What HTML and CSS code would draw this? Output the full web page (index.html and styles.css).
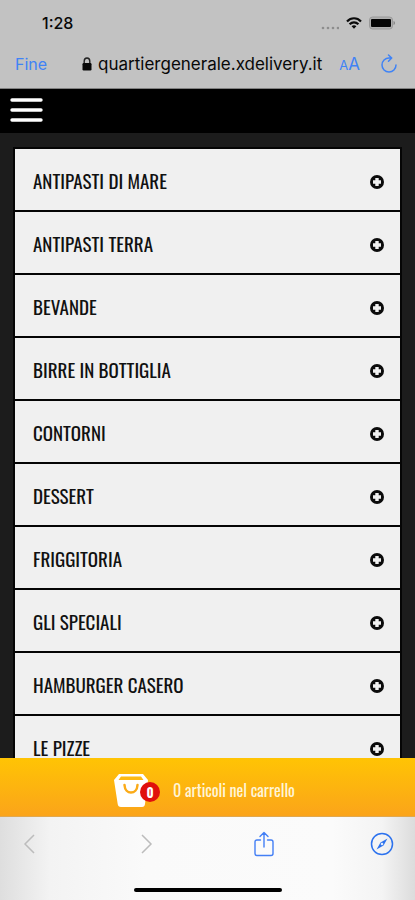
FILE: index.html
```html
<!DOCTYPE html>
<html lang="it">
<head>
<meta charset="utf-8">
<meta name="viewport" content="width=device-width, initial-scale=1">
<title>Quartier Generale</title>
<link rel="stylesheet" href="styles.css">
</head>
<body>
<svg class="sprite" aria-hidden="true">
  <symbol id="plus" viewBox="0 0 14 14">
    <circle cx="7" cy="7" r="7" fill="#0b0b0b"/>
    <path d="M7 3v8M3 7h8" stroke="#f0f0f0" stroke-width="3.400"/>
  </symbol>
</svg>
<header class="browser">
  <div class="status">
    <span class="clock">1:28</span>
    <span class="signals">
      <svg width="18" height="4" viewBox="0 0 18 4" fill="#8d8d8d"><circle cx="2" cy="2" r="1.300"/><circle cx="7" cy="2" r="1.300"/><circle cx="12" cy="2" r="1.300"/><circle cx="17" cy="2" r="1.300"/></svg>
      <svg width="16" height="12" viewBox="0 0 16 12" fill="none" stroke="#0a0a0a" stroke-width="2.200"><path d="M1 4.400C5 .2 11 .2 15 4.400M3.600 7.300c2.600-2.700 6.200-2.700 8.800 0"/><path d="M5.600 9.200 8 11.800l2.400-2.600c-1.400-1.200-3.400-1.200-4.800 0z" fill="#0a0a0a" stroke="none"/></svg>
      <svg width="26" height="14" viewBox="0 0 26 14"><rect x=".5" y="1" width="23" height="12" rx="3" fill="#b0b0b0" stroke="#999"/><rect x="2" y="3" width="20" height="8" rx="1" fill="#050505"/><path d="M24.500 5c2 .6 2 3.400 0 4z" fill="#888"/></svg>
    </span>
  </div>
  <div class="address">
    <a class="done" href="#">Fine</a>
    <span class="url"><svg width="10" height="14" viewBox="0 0 10 14"><path d="M2.200 7V4.200a2.800 3.200 0 0 1 5.600 0V7" fill="none" stroke="#222" stroke-width="1.400"/><rect x=".5" y="6" width="9" height="7.500" rx="1.200" fill="#080808"/></svg>quartiergenerale.xdelivery.it</span>
    <button class="plain text-size" type="button" aria-label="Dimensione testo"><small>A</small>A</button>
    <button class="plain" type="button" aria-label="Ricarica"><svg width="18" height="20" viewBox="0 0 18 20" fill="none" stroke="#3f83f6" stroke-width="1.500" stroke-linecap="round" stroke-linejoin="round"><path d="M16 11a7 7 0 1 1-7-7h2.500M8.500 1l3.200 3-3.200 3.200"/></svg></button>
  </div>
</header>
<nav class="menu-bar">
  <button class="plain" type="button" aria-label="Menu"><svg width="33" height="24" viewBox="0 0 33 24" stroke="#fff" stroke-width="3.400" stroke-linecap="round"><path d="M2 2h29M2 12h29M2 22h29"/></svg></button>
</nav>
<main class="content">
  <div class="categories">
    <button class="category" type="button">ANTIPASTI DI MARE<svg><use href="#plus"/></svg></button>
    <button class="category" type="button">ANTIPASTI TERRA<svg><use href="#plus"/></svg></button>
    <button class="category" type="button">BEVANDE<svg><use href="#plus"/></svg></button>
    <button class="category" type="button">BIRRE IN BOTTIGLIA<svg><use href="#plus"/></svg></button>
    <button class="category" type="button">CONTORNI<svg><use href="#plus"/></svg></button>
    <button class="category" type="button">DESSERT<svg><use href="#plus"/></svg></button>
    <button class="category" type="button">FRIGGITORIA<svg><use href="#plus"/></svg></button>
    <button class="category" type="button">GLI SPECIALI<svg><use href="#plus"/></svg></button>
    <button class="category" type="button">HAMBURGER CASERO<svg><use href="#plus"/></svg></button>
    <button class="category" type="button">LE PIZZE<svg><use href="#plus"/></svg></button>
  </div>
</main>
<a class="cart" href="#">
  <span class="bag">
    <svg width="34" height="33" viewBox="0 0 34 33"><path d="M5 0h24l5 6-3 24q-.3 3-3 3H7q-3 0-3.300-3L0 6z" fill="#fff"/><path d="M7 2.500h20L29.500 6h-25z" fill="#fdb913"/><path d="M10.500 11c.5 10 12.500 10 13 0" fill="none" stroke="#fbab18" stroke-width="2.500" stroke-linecap="round"/></svg>
    <span class="badge">0</span>
  </span>
  <span>0 articoli nel carrello</span>
</a>
<footer class="toolbar">
  <div class="tools">
    <button class="plain" type="button" aria-label="Indietro"><svg width="12" height="20" viewBox="0 0 12 20" fill="none" stroke="#bcbcbc" stroke-width="1.500"><path d="M11 1 2 10l9 9"/></svg></button>
    <button class="plain" type="button" aria-label="Avanti"><svg width="12" height="20" viewBox="0 0 12 20" fill="none" stroke="#bcbcbc" stroke-width="1.500"><path d="m1 1 9 9-9 9"/></svg></button>
    <button class="plain" type="button" aria-label="Condividi"><svg width="20" height="26" viewBox="0 0 20 26" fill="none" stroke="#437ff5" stroke-width="1.400" stroke-linecap="round" stroke-linejoin="round"><path d="M6.500 9H3Q1 9 1 11v11.500q0 2 2 2h14q2 0 2-2V11q0-2-2-2h-3.500M10 16V1.500M6 5.500l4-4 4 4"/></svg></button>
    <button class="plain" type="button" aria-label="Safari"><svg width="24" height="24" viewBox="0 0 24 24"><circle cx="12" cy="12" r="10.500" fill="none" stroke="#2c72ee" stroke-width="1.500"/><path d="m17.500 6.500-4 7-7 4 4-7z" fill="#2c72ee"/><circle cx="12" cy="12" r="1.300" fill="#dfeafc"/></svg></button>
  </div>
  <div class="home"></div>
</footer>
</body>
</html>
```
FILE: styles.css
```css
* {
  box-sizing: border-box;
}

body {
  margin: 0;
  height: 100vh;
  display: flex;
  flex-direction: column;
  overflow: hidden;
  background: #1c1c1c;
  font-family: Inter, "Liberation Sans", sans-serif;
  color: #080808;
}

svg {
  display: block;
  flex: none;
}

.sprite {
  position: absolute;
  width: 0;
  height: 0;
}

.plain {
  padding: 0;
  border: 0;
  background: none;
  color: #3f83f6;
  font: inherit;
}

a {
  text-decoration: none;
}

.browser {
  flex: none;
  background: #c2c2c2;
  border-bottom: 1px solid #808080;
}

.status {
  display: flex;
  justify-content: space-between;
  align-items: center;
  height: 46px;
  padding: 0 20px 0 42px;
}

.clock {
  font-size: 16px;
  font-weight: 500;
}

.signals {
  display: flex;
  align-items: center;
  gap: 7px;
}

.signals svg:first-child {
  align-self: flex-end;
}

.address {
  display: flex;
  align-items: center;
  height: 42px;
  padding: 0 17px 6px 15px;
  font-size: 17px;
}

.done {
  color: #3f83f6;
  font-size: 16px;
}

.url {
  display: flex;
  align-items: center;
  gap: 6px;
  margin: 0 17px 0 auto;
}

.text-size {
  margin-right: 20px;
}

.text-size small {
  font-size: 13px;
}

.menu-bar {
  flex: none;
  display: flex;
  align-items: center;
  height: 44px;
  padding: 0 10px 2px;
  background: #000;
}

.content {
  flex: 1;
  min-height: 0;
  overflow: hidden;
  padding: 14px 13px 0;
}

.categories {
  display: flex;
  flex-direction: column;
  gap: 2px;
  padding: 2px;
  background: #050505;
}

.category {
  display: flex;
  align-items: center;
  justify-content: space-between;
  height: 61px;
  padding: 0 16px 0 18px;
  border: 0;
  background: #f0f0f0;
  color: #111;
  font: 19px Oswald, "Liberation Sans Narrow", sans-serif;
}

.category svg {
  width: 14px;
  height: 14px;
  margin-top: 4px;
}

.cart {
  flex: none;
  display: flex;
  align-items: center;
  justify-content: center;
  gap: 25px;
  height: 59px;
  padding: 6px 6px 0 0;
  background: linear-gradient(#ffc404, #fba41a);
  border-bottom: 1px solid #e0a850;
  color: #fff5d8;
  font: 16px Oswald, "Liberation Sans Narrow", sans-serif;
}

.bag {
  position: relative;
}

.badge {
  position: absolute;
  right: -12px;
  top: 8px;
  width: 20px;
  height: 20px;
  border-radius: 50%;
  background: #e0100c;
  color: #fff;
  font-size: 13px;
  font-weight: 700;
  line-height: 20px;
  text-align: center;
}

.toolbar {
  flex: none;
  height: 83px;
  padding-top: 14px;
  background: linear-gradient(90deg, #dedede, #f3f3f3 12%, #fafafa 35%, #fbfbfb 80%, #f4f4f4 92%, #dcdcdc);
}

.tools {
  display: flex;
  align-items: center;
  justify-content: space-between;
  height: 26px;
  padding: 0 21px 0 17px;
}

.tools .plain {
  display: flex;
  justify-content: center;
  width: 24px;
}

.home {
  width: 148px;
  height: 4px;
  margin: 31px auto 0;
  border-radius: 2px;
  background: #000;
}
```
